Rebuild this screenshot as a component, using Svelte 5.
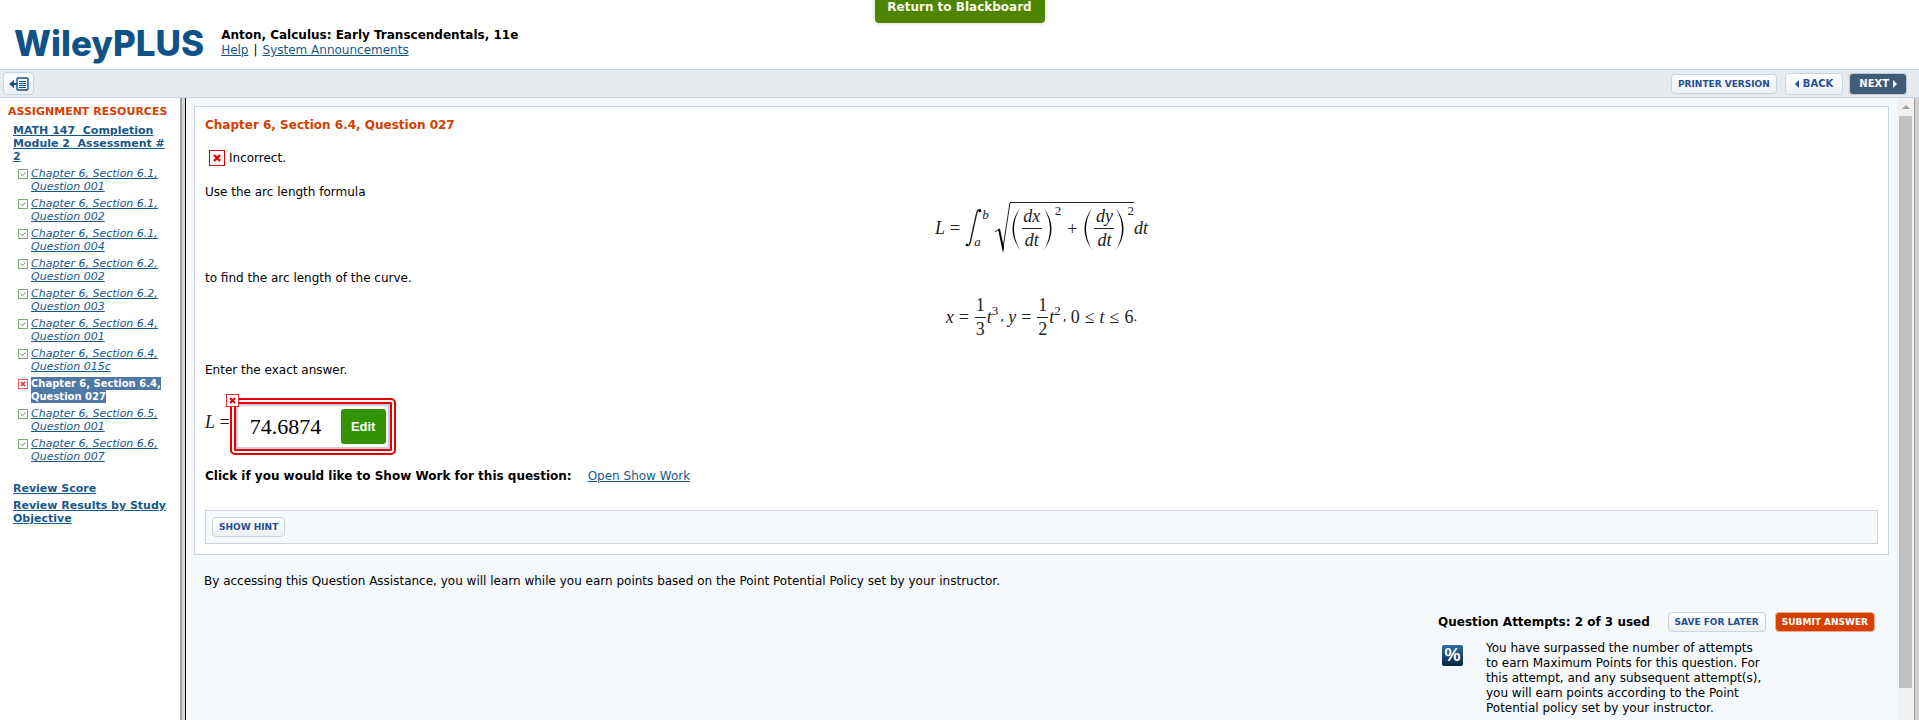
<script>
  const resources = [
    { section: '6.1', question: '001' },
    { section: '6.1', question: '002' },
    { section: '6.1', question: '004' },
    { section: '6.2', question: '002' },
    { section: '6.2', question: '003' },
    { section: '6.4', question: '001' },
    { section: '6.4', question: '015c' },
    { section: '6.4', question: '027', wrong: true },
    { section: '6.5', question: '001' },
    { section: '6.6', question: '007' }
  ];

  let answer = '74.6874';
</script>

{#snippet paren(right)}
  <svg class="paren" viewBox="0 0 10 44" width="10" height="44" aria-hidden="true">
    {#if right}
      <path d="M1 1 Q16 22 1 43 Q13 22 1 1Z" />
    {:else}
      <path d="M9 1 Q-6 22 9 43 Q-3 22 9 1Z" />
    {/if}
  </svg>
{/snippet}

{#snippet frac(top, bottom, italic)}
  <span class="frac" class:italic>
    <span>{top}</span>
    <span class="denominator">{bottom}</span>
  </span>
{/snippet}

{#snippet cross(size)}
  <svg viewBox="0 0 16 16" width={size} height={size} aria-hidden="true">
    <rect x="0.5" y="0.5" width="15" height="15" fill="#fff" stroke="#e60000" />
    <path d="M5 5L11 11M11 5L5 11" stroke="#e60000" stroke-width="2.4" />
  </svg>
{/snippet}

<div class="page">
  <header>
    <span class="logo">WileyPLUS</span>
    <div class="course">
      <strong>Anton, Calculus: Early Transcendentals, 11e</strong>
      <div class="links"><a href="#help">Help</a><span>|</span><a href="#announcements">System Announcements</a></div>
    </div>
    <button class="blackboard">Return to Blackboard</button>
  </header>

  <div class="toolbar">
    <button class="btn toggle" aria-label="Hide resources">
      <svg viewBox="0 0 20 14" width="20" height="14" fill="none" stroke="#0f5288">
        <path d="M0 7L5 3V6H8V8H5V11Z" fill="#0f5288" stroke="none" />
        <rect x="8" y="1" width="11" height="12" rx="1" stroke-width="1.4" />
        <path d="M10 4.5H17M10 6.5H17M10 8.5H17M10 10.5H17" />
      </svg>
    </button>
    <div class="nav">
      <button class="btn printer">PRINTER VERSION</button>
      <button class="btn tall">
        <svg viewBox="0 0 4 8" width="4" height="8"><path d="M4 0V8L0 4Z" fill="currentColor" /></svg>
        BACK
      </button>
      <button class="btn tall next">
        NEXT
        <svg viewBox="0 0 4 8" width="4" height="8"><path d="M0 0V8L4 4Z" fill="currentColor" /></svg>
      </button>
    </div>
  </div>

  <div class="frames">
    <aside>
      <h2>ASSIGNMENT RESOURCES</h2>
      <a class="heading" href="#assignment">MATH 147&nbsp; Completion Module 2&nbsp; Assessment # 2</a>
      <ul>
        {#each resources as item}
          <li class:wrong={item.wrong}>
            <svg viewBox="0 0 10 10" width="10" height="10" aria-hidden="true">
              {#if item.wrong}
                <rect x="0.5" y="0.5" width="9" height="9" fill="#fff" stroke="#ea5a5f" />
                <path d="M3 3L7 7M7 3L3 7" stroke="#e3262d" stroke-width="1.5" />
              {:else}
                <rect x="0.5" y="0.5" width="9" height="9" fill="#fff" stroke="#7da873" />
                <path d="M2.5 5L4.3 6.7L7.5 3.4" fill="none" stroke="#5e9450" />
              {/if}
            </svg>
            <div>
              <a href="#q{item.section}-{item.question}">Chapter 6, Section {item.section},<br />Question {item.question}</a>
            </div>
          </li>
        {/each}
      </ul>
      <a class="heading" href="#score">Review Score</a>
      <a class="heading" href="#results">Review Results by Study Objective</a>
    </aside>

    <div class="splitter"></div>

    <main>
      <section class="card">
        <h1>Chapter 6, Section 6.4, Question 027</h1>
        <p class="status">{@render cross(16)} Incorrect.</p>
        <p>Use the arc length formula</p>

        <div class="math arc">
          <i>L</i>
          <span class="op">=</span>
          <span class="integral">
            <svg viewBox="0 0 17 40" width="17" height="40" aria-hidden="true">
              <path d="M1 37C4 39 5 36 6 31L11 8C12 3 13 1 16 2" fill="none" stroke="#222" stroke-width="1.4" />
              <circle cx="2" cy="37" r="1.3" />
              <circle cx="15" cy="3" r="1.3" />
            </svg>
            <span class="limits"><i>b</i><i class="lower">a</i></span>
          </span>
          <svg class="radical" viewBox="0 0 16 52" width="16" height="52" aria-hidden="true">
            <path d="M0 30L4 27L8 46L15 0.5H16" fill="none" stroke="#222" />
            <path d="M3 27L8 51L9 46L5 27Z" />
          </svg>
          <span class="root">
            {@render paren(false)}
            {@render frac('dx', 'dt', true)}
            {@render paren(true)}
            <sup>2</sup>
            <span class="op plus">+</span>
            {@render paren(false)}
            {@render frac('dy', 'dt', true)}
            {@render paren(true)}
            <sup>2</sup>
          </span>
          <i>dt</i>
        </div>

        <p>to find the arc length of the curve.</p>

        <div class="math curve">
          <i>x</i>
          <span class="op">=</span>
          {@render frac('1', '3', false)}
          <i>t</i><sup>3</sup><span class="punct">,</span>
          <i>y</i>
          <span class="op">=</span>
          {@render frac('1', '2', false)}
          <i>t</i><sup>2</sup><span class="punct">,</span>
          <span>0</span><span class="op">≤</span><i>t</i><span class="op">≤</span><span>6</span><span class="punct end">.</span>
        </div>

        <p>Enter the exact answer.</p>

        <div class="answer">
          <label for="answer"><i>L</i> =</label>
          <div class="answer-box">
            <span class="badge">{@render cross(13)}</span>
            <input id="answer" type="text" bind:value={answer} />
            <button class="edit">Edit</button>
          </div>
        </div>

        <p class="show-work">
          <strong>Click if you would like to Show Work for this question:</strong>
          <a href="#work">Open Show Work</a>
        </p>

        <div class="hint"><button class="btn">SHOW HINT</button></div>
      </section>

      <p class="policy">
        By accessing this Question Assistance, you will learn while you earn points based on the Point Potential Policy set by your instructor.
      </p>

      <section class="attempts">
        <div class="attempts-row">
          <strong>Question Attempts: 2 of 3 used</strong>
          <button class="btn">SAVE FOR LATER</button>
          <button class="btn submit">SUBMIT ANSWER</button>
        </div>
        <div class="notice">
          <span class="percent">%</span>
          <p>You have surpassed the number of attempts to earn Maximum Points for this question. For this attempt, and any subsequent attempt(s), you will earn points according to the Point Potential policy set by your instructor.</p>
        </div>
      </section>
    </main>

    <div class="scrollbar" aria-hidden="true">
      <svg viewBox="0 0 8 4" width="8" height="4"><path d="M4 0L8 4H0Z" fill="#a3a3a3" /></svg>
      <div class="thumb"></div>
    </div>
    <div class="edge"></div>
  </div>
</div>

<style>
  :global(body) {
    margin: 0;
    overflow: hidden;
  }

  .page {
    display: flex;
    flex-direction: column;
    height: 100vh;
    background: #fff;
    color: #000;
    font-family: Verdana, 'DejaVu Sans', sans-serif;
    font-size: 12px;
    line-height: 15px;
  }

  h1, h2, p, ul {
    margin: 0;
    padding: 0;
  }

  a {
    color: #17588b;
  }

  button {
    font-family: inherit;
    cursor: pointer;
  }

  svg {
    display: block;
    flex: none;
  }

  header {
    position: relative;
    display: flex;
    flex: none;
    gap: 17px;
    height: 69px;
    padding-left: 14px;
    box-sizing: border-box;
  }

  .logo {
    padding-top: 22px;
    color: #0f5288;
    font: 800 35px/42px Inter, sans-serif;
  }

  .course {
    padding-top: 28px;
  }

  .links {
    display: flex;
    gap: 5px;
  }

  .blackboard {
    position: absolute;
    top: 0;
    left: 50%;
    transform: translateX(-50%);
    width: 170px;
    height: 23px;
    padding: 0 0 8px;
    border: 0;
    border-radius: 0 0 4px 4px;
    background: #4f8400;
    box-shadow: 0 0 4px #c8d8b0;
    color: #f4f8ee;
    font-size: 12px;
    font-weight: bold;
    line-height: 15px;
  }

  .toolbar {
    display: flex;
    flex: none;
    align-items: center;
    justify-content: space-between;
    height: 27px;
    padding: 0 12px 0 3px;
    border-top: 1px solid #cbd3df;
    border-bottom: 1px solid #cbd3df;
    background: #e6ebf0;
  }

  .nav {
    display: flex;
    align-items: center;
    gap: 6px;
  }

  .printer {
    margin-right: 2px;
  }

  .btn {
    display: flex;
    align-items: center;
    justify-content: center;
    gap: 4px;
    height: 20px;
    padding: 0 6px;
    border: 1px solid #cbd3df;
    border-radius: 4px;
    background: linear-gradient(#fff, #edf0f4);
    color: #264f90;
    font-size: 9px;
    font-weight: bold;
    white-space: nowrap;
  }

  .toggle {
    width: 31px;
    height: 23px;
  }

  .tall {
    height: 22px;
    padding: 0 9px;
    font-size: 10px;
  }

  .next {
    border-color: #bccbdb;
    background: #3e5c78;
    color: #fff;
  }

  .submit {
    border-color: #f5a98a;
    background: #d44000;
    color: #fff;
  }

  .frames {
    display: flex;
    flex: 1;
    min-height: 0;
  }

  aside {
    flex: none;
    width: 180px;
    padding: 6px 8px;
    box-sizing: border-box;
    font-size: 11px;
    line-height: 13px;
  }

  h2 {
    margin-bottom: 5px;
    color: #d44000;
    font-size: 11px;
    line-height: 15px;
    white-space: nowrap;
  }

  .heading {
    display: block;
    margin: 4px 0 0 5px;
    font-weight: bold;
  }

  ul {
    padding: 4px 0 11px 10px;
    list-style: none;
  }

  li {
    display: flex;
    gap: 3px;
    margin-bottom: 4px;
    font-style: italic;
    white-space: nowrap;
  }

  li svg {
    margin-top: 2px;
  }

  .wrong a {
    padding: 1px 0;
    background: #5078a4;
    color: #fff;
    font-size: 10px;
    font-style: normal;
    font-weight: bold;
    text-decoration: none;
  }

  .splitter {
    flex: none;
    width: 3px;
    border-left: 2px solid #a0a0a0;
    border-right: 1px solid #000;
    background: #d4d4d4;
  }

  main {
    flex: 1;
    min-width: 0;
    padding: 8px;
    background: #f5f9fc;
    overflow: hidden;
  }

  .card {
    padding: 11px 10px 10px;
    border: 1px solid #cbd3df;
    background: #fff;
  }

  h1 {
    color: #d44000;
    font-size: 12px;
    line-height: 15px;
  }

  .status {
    display: flex;
    align-items: center;
    gap: 4px;
    padding: 17px 4px 19px;
  }

  .math {
    display: flex;
    align-items: center;
    justify-content: center;
    box-sizing: border-box;
    padding-bottom: 15px;
    color: #222;
    font: 18px/20px 'Liberation Serif', serif;
  }

  .arc {
    height: 71px;
  }

  .curve {
    height: 77px;
  }

  .op {
    padding: 0 5px;
  }

  .integral {
    display: flex;
    margin-right: 6px;
  }

  .limits {
    display: flex;
    flex-direction: column;
    justify-content: space-between;
    font-size: 13px;
    line-height: 13px;
  }

  .lower {
    margin-left: -8px;
  }

  .root {
    display: flex;
    align-items: center;
    height: 51px;
    border-top: 1px solid #222;
  }

  .plus {
    padding: 0 6px;
  }

  .frac {
    display: flex;
    flex-direction: column;
    margin: 0 1px;
    line-height: 23px;
    text-align: center;
  }

  .frac > span {
    min-width: 11px;
  }

  .italic > span {
    min-width: 20px;
    font-style: italic;
  }

  .denominator {
    border-top: 1px solid #222;
  }

  sup {
    align-self: flex-start;
    padding-left: 2px;
    font-size: 13px;
    line-height: 16px;
  }

  .curve sup {
    align-self: center;
    padding: 0 0 12px;
  }

  .punct {
    padding: 0 4px 0 2px;
    color: #000;
    font: 12px/20px Verdana, 'DejaVu Sans', sans-serif;
  }

  .end {
    padding: 0;
  }

  .answer {
    display: flex;
    align-items: flex-start;
    padding: 20px 0 14px;
  }

  .answer label {
    padding-top: 14px;
    color: #222;
    font: 18px/20px 'Liberation Serif', serif;
  }

  .answer-box {
    position: relative;
    display: flex;
    align-items: center;
    height: 45px;
    padding: 0 4px 0 14px;
    border: 6px double #e60000;
    border-radius: 5px;
    box-shadow: inset 0 0 0 2px #c5cedb;
  }

  .badge {
    position: absolute;
    top: -10px;
    left: -10px;
  }

  .answer-box input {
    width: 76px;
    margin-right: 15px;
    padding: 0;
    border: 0;
    outline: 0;
    background: none;
    color: #000;
    font: 22px/26px 'Liberation Serif', serif;
  }

  .edit {
    width: 45px;
    height: 35px;
    padding: 0;
    border: 0;
    border-radius: 3px;
    background: #339200;
    color: #fff;
    font: bold 13px/16px 'Liberation Sans', sans-serif;
  }

  .show-work {
    display: flex;
    gap: 16px;
    padding-bottom: 26px;
  }

  .hint {
    padding: 6px;
    border: 1px solid #cbd3df;
    background: #f5f9fc;
  }

  .policy {
    padding: 19px 10px 23px;
  }

  .attempts {
    display: flex;
    flex-direction: column;
    gap: 9px;
    width: 437px;
    margin-left: auto;
    margin-right: 14px;
  }

  .attempts-row {
    display: flex;
    align-items: center;
    gap: 9px;
  }

  .attempts-row strong {
    margin-right: auto;
  }

  .notice {
    display: flex;
    align-items: flex-start;
    gap: 23px;
    padding-left: 4px;
  }

  .notice p {
    width: 280px;
  }

  .percent {
    width: 21px;
    margin-top: 4px;
    border-radius: 2px;
    background: linear-gradient(#2f6ea5, #082439);
    color: #fff;
    font: bold 18px/21px 'Liberation Sans', sans-serif;
    text-align: center;
  }

  .scrollbar {
    display: flex;
    flex: none;
    flex-direction: column;
    align-items: center;
    gap: 7px;
    width: 17px;
    padding-top: 7px;
    box-sizing: border-box;
    background: #f1f1f1;
  }

  .thumb {
    width: 13px;
    height: 93%;
    background: #c1c1c1;
  }

  .edge {
    flex: none;
    width: 4px;
    border-left: 1px solid #a0a0a0;
    background: #d0d0d0;
  }
</style>
